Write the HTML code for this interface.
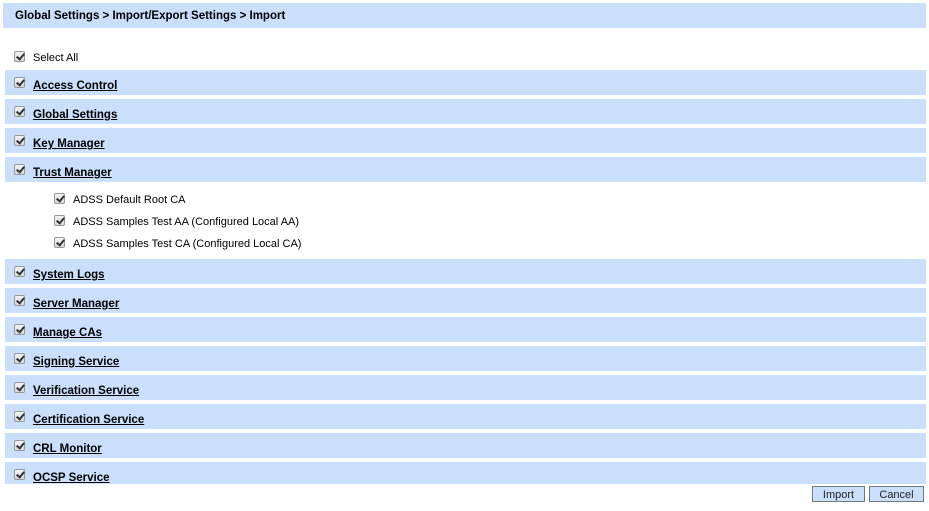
<!DOCTYPE html><html><head><style>
body{margin:0;width:929px;height:511px;background:#fff;font-family:"Liberation Sans","DejaVu Sans",sans-serif;font-size:11px;color:#000;position:relative;overflow:hidden}
.a{position:absolute}
.band{position:absolute;left:5px;width:921px;height:25px;background:#cadffc}
.cb{position:absolute;width:11px;height:11px;border:1px solid #999;border-radius:2px;background:linear-gradient(#f4f4f4,#d8d8d8);box-sizing:border-box}
.cb:after{content:"";position:absolute;left:3px;top:0px;width:3px;height:6px;border:solid #333;border-width:0 2px 2px 0;transform:rotate(40deg)}
.lbl{position:absolute;font-weight:bold;text-decoration:underline;font-size:11.5px}
.btn{position:absolute;top:486px;height:16px;border:1px solid #777;background:#cadffc;font-size:11px;text-align:center;line-height:16px;box-sizing:border-box;color:#222}
</style></head><body>
<div class="a" style="left:3px;top:3px;width:923px;height:25px;background:#cadffc"></div>
<div class="a" style="left:15px;top:10px;font-weight:bold;font-size:11.5px">Global Settings &gt; Import/Export Settings &gt; Import</div>
<div class="cb" style="left:14px;top:51px"></div><div class="a" style="left:33px;top:52px">Select All</div>

<div class="band" style="top:70px"></div><div class="cb" style="left:14px;top:77px"></div><div class="lbl" style="left:33px;top:80px">Access Control</div>
<div class="band" style="top:99px"></div><div class="cb" style="left:14px;top:106px"></div><div class="lbl" style="left:33px;top:109px">Global Settings</div>
<div class="band" style="top:128px"></div><div class="cb" style="left:14px;top:135px"></div><div class="lbl" style="left:33px;top:138px">Key Manager</div>
<div class="band" style="top:157px"></div><div class="cb" style="left:14px;top:164px"></div><div class="lbl" style="left:33px;top:167px">Trust Manager</div>

<div class="cb" style="left:54px;top:193px"></div><div class="a" style="left:73px;top:194px">ADSS Default Root CA</div>
<div class="cb" style="left:54px;top:215px"></div><div class="a" style="left:73px;top:216px">ADSS Samples Test AA (Configured Local AA)</div>
<div class="cb" style="left:54px;top:237px"></div><div class="a" style="left:73px;top:238px">ADSS Samples Test CA (Configured Local CA)</div>

<div class="band" style="top:259px"></div><div class="cb" style="left:14px;top:266px"></div><div class="lbl" style="left:33px;top:269px">System Logs</div>
<div class="band" style="top:288px"></div><div class="cb" style="left:14px;top:295px"></div><div class="lbl" style="left:33px;top:298px">Server Manager</div>
<div class="band" style="top:317px"></div><div class="cb" style="left:14px;top:324px"></div><div class="lbl" style="left:33px;top:327px">Manage CAs</div>
<div class="band" style="top:346px"></div><div class="cb" style="left:14px;top:353px"></div><div class="lbl" style="left:33px;top:356px">Signing Service</div>
<div class="band" style="top:375px"></div><div class="cb" style="left:14px;top:382px"></div><div class="lbl" style="left:33px;top:385px">Verification Service</div>
<div class="band" style="top:404px"></div><div class="cb" style="left:14px;top:411px"></div><div class="lbl" style="left:33px;top:414px">Certification Service</div>
<div class="band" style="top:433px"></div><div class="cb" style="left:14px;top:440px"></div><div class="lbl" style="left:33px;top:443px">CRL Monitor</div>
<div class="band" style="top:462px;height:22px"></div><div class="cb" style="left:14px;top:469px"></div><div class="lbl" style="left:33px;top:472px">OCSP Service</div>

<div class="btn" style="left:812px;width:53px">Import</div>
<div class="btn" style="left:869px;width:55px">Cancel</div>
</body></html>
